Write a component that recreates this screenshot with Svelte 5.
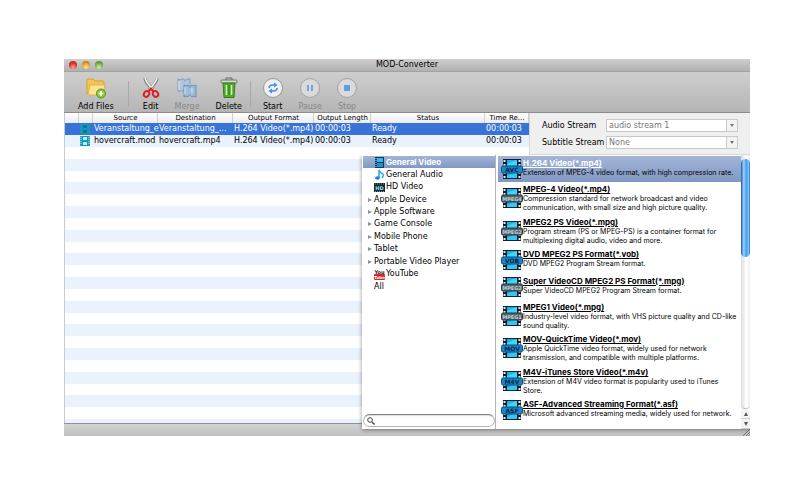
<script lang="ts">
    type Job = { source: string; dest: string; format: string };
    type Category = { name: string; icon?: string; group?: boolean };
    type Format = { name: string; tag: string; text: string; dark?: boolean };

    const jobs: Job[] = [
        {
            source: "Veranstaltung_e",
            dest: "Veranstaltung_...",
            format: "H.264 Video(*.mp4)",
        },
        {
            source: "hovercraft.mod",
            dest: "hovercraft.mp4",
            format: "H.264 Video(*.mp4)",
        },
    ];

    const categories: Category[] = [
        { name: "General Video", icon: "video" },
        { name: "General Audio", icon: "audio" },
        { name: "HD Video", icon: "hd" },
        { name: "Apple Device", group: true },
        { name: "Apple Software", group: true },
        { name: "Game Console", group: true },
        { name: "Mobile Phone", group: true },
        { name: "Tablet", group: true },
        { name: "Portable Video Player", group: true },
        { name: "YouTube", icon: "youtube" },
        { name: "All" },
    ];

    const formats: Format[] = [
        {
            name: "H.264 Video(*.mp4)",
            tag: "AVC",
            text: "Extension of MPEG-4 video format, with high compression rate.",
        },
        {
            name: "MPEG-4 Video(*.mp4)",
            tag: "MPEG4",
            dark: true,
            text: "Compression standard for network broadcast and video\ncommunication, with small size and high picture quality.",
        },
        {
            name: "MPEG2 PS Video(*.mpg)",
            tag: "MPEG2",
            dark: true,
            text: "Program stream (PS or MPEG-PS) is a container format for\nmultiplexing digital audio, video and more.",
        },
        {
            name: "DVD MPEG2 PS Format(*.vob)",
            tag: "VOB",
            text: "DVD MPEG2 Program Stream format.",
        },
        {
            name: "Super VideoCD MPEG2 PS Format(*.mpg)",
            tag: "MPEG2",
            dark: true,
            text: "Super VideoCD MPEG2 Program Stream format.",
        },
        {
            name: "MPEG1 Video(*.mpg)",
            tag: "MPEG1",
            dark: true,
            text: "Industry-level video format, with VHS picture quality and CD-like\nsound quality.",
        },
        {
            name: "MOV-QuickTime Video(*.mov)",
            tag: "MOV",
            text: "Apple QuickTime video format, widely used for network\ntransmission, and compatible with multiple platforms.",
        },
        {
            name: "M4V-iTunes Store Video(*.m4v)",
            tag: "M4V",
            text: "Extension of M4V video format is popularity used to iTunes\nStore.",
        },
        {
            name: "ASF-Advanced Streaming Format(*.asf)",
            tag: "ASF",
            text: "Microsoft advanced streaming media, widely used for network.",
        },
    ];

    let selectedJob = $state(0);
    let selectedCategory = $state("General Video");
    let selectedFormat = $state(0);
    let query = $state("");
</script>

{#snippet film()}
    <svg class="film" viewBox="0 0 10 10">
        <rect width="10" height="10" rx="1" fill="#1597b8" />
        <rect x="3" y="1" width="4" height="3" class="frame" />
        <rect x="3" y="6" width="4" height="3" class="frame" />
        <path d="M1 1v8M9 1v8" class="holes" stroke-dasharray="1 1" />
    </svg>
{/snippet}

<main class="window">
    <header class="titlebar">
        <div class="lights">
            <button class="red" aria-label="Close"></button>
            <button class="yellow" aria-label="Minimize"></button>
            <button class="green" aria-label="Zoom"></button>
        </div>
        <h1>MOD-Converter</h1>
    </header>

    <nav class="toolbar">
        <button class="tool">
            <svg viewBox="0 0 24 22">
                <path d="M3 17V3q0-1 1-1h5l2 2h8q1 0 1 1v12z" fill="#f0c651" stroke="#d3a133" />
                <path d="M4 18 6 8h15l-2 10z" fill="#fde394" stroke="#dfb44c" />
                <circle cx="17" cy="16.500" r="4.500" fill="#8cc63a" stroke="#5b9620" />
                <path d="M17 14v5M14.500 16.500h5" stroke="#fff" stroke-width="1.500" />
            </svg>
            <span>Add Files</span>
        </button>
        <i class="sep"></i>
        <button class="tool">
            <svg viewBox="0 0 24 22">
                <path d="M6 1q0 4 8 12M18 1q0 4-8 12" fill="none" stroke="#777" stroke-width="3" />
                <path d="M6 1q1 4 8 12M18 1q-1 4-8 12" fill="none" stroke="#f2f2f2" stroke-width="1.600" />
                <ellipse cx="7.500" cy="17" rx="2.500" ry="3" transform="rotate(35 7.500 17)" fill="none" stroke="#d92222" stroke-width="2" />
                <ellipse cx="16.500" cy="17" rx="2.500" ry="3" transform="rotate(-35 16.500 17)" fill="none" stroke="#d92222" stroke-width="2" />
                <path d="m9 15 3-3.500 3 3.500" fill="none" stroke="#d92222" stroke-width="2" />
            </svg>
            <span>Edit</span>
        </button>
        <button class="tool" disabled>
            <svg viewBox="0 0 24 22">
                <path d="M3 2q2 2 4 0h2q1 4 3 0h3v12H3z" fill="#b1c6dd" stroke="#7e9cbd" />
                <path d="M9 8q2 2 4 0 1 4 4 0 2 2 4 0v12q-2-2-4 0-3-4-4 0-2-2-4 0z" fill="#9dbbdc" stroke="#6b8fb9" />
                <path d="M4 4v9M10 10v7M17 11v5" stroke="#dce8f4" />
            </svg>
            <span>Merge</span>
        </button>
        <button class="tool">
            <svg viewBox="0 0 24 22">
                <path d="M9 3V1h6v2" fill="none" stroke="#666" />
                <rect x="4" y="3" width="16" height="3" rx="1" fill="#d9dfd5" stroke="#69756a" />
                <path d="m6 6 1 14.500h10L18 6z" fill="#50ad27" stroke="#39791f" />
                <path d="M9.500 8v10M14.500 8v10" stroke="#d2f3bc" stroke-width="1.500" />
                <path d="M12 8v10" stroke="#2f7d13" />
            </svg>
            <span>Delete</span>
        </button>
        <i class="sep near"></i>
        <button class="tool">
            <svg viewBox="0 0 24 22">
                <circle cx="12" cy="11" r="9.500" fill="#eee" stroke="#969696" />
                <path d="M8 11q0-3 4-3h1M16 11q0 3-4 3h-1" fill="none" stroke="#408fe8" stroke-width="1.600" />
                <path d="m13 5.500 3.500 2.500-3.500 2.500zM11 11.500 7.500 14l3.500 2.500z" fill="#408fe8" />
            </svg>
            <span>Start</span>
        </button>
        <button class="tool" disabled>
            <svg viewBox="0 0 24 22">
                <circle cx="12" cy="11" r="9.500" fill="#dadada" stroke="#a2a2a2" />
                <path d="M10 8v6M14 8v6" stroke="#6ea5ea" stroke-width="2" />
            </svg>
            <span>Pause</span>
        </button>
        <button class="tool" disabled>
            <svg viewBox="0 0 24 22">
                <circle cx="12" cy="11" r="9.500" fill="#dadada" stroke="#a2a2a2" />
                <rect x="9" y="8" width="6" height="6" fill="#5f9de9" />
            </svg>
            <span>Stop</span>
        </button>
    </nav>

    <div class="workspace">
        <section class="queue">
            <table>
                <colgroup>
                    <col class="c-check" />
                    <col class="c-icon" />
                    <col class="c-source" />
                    <col class="c-dest" />
                    <col class="c-format" />
                    <col class="c-length" />
                    <col />
                    <col class="c-time" />
                </colgroup>
                <thead>
                    <tr>
                        <th></th>
                        <th></th>
                        <th>Source</th>
                        <th>Destination</th>
                        <th>Output Format</th>
                        <th>Output Length</th>
                        <th>Status</th>
                        <th>Time Re...</th>
                    </tr>
                </thead>
                <tbody>
                    {#each jobs as job, i}
                        <tr
                            class:selected={selectedJob === i}
                            onclick={() => (selectedJob = i)}
                        >
                            <td></td>
                            <td>{@render film()}</td>
                            <td>{job.source}</td>
                            <td>{job.dest}</td>
                            <td>{job.format}</td>
                            <td>00:00:03</td>
                            <td>Ready</td>
                            <td>00:00:03</td>
                        </tr>
                    {/each}
                </tbody>
            </table>
            <div class="blank">
                {#each Array(24) as _}
                    <div></div>
                {/each}
            </div>
        </section>

        <section class="side">
            <form class="streams">
                <label for="audio">Audio Stream</label>
                <span class="pick">
                    <select id="audio" disabled><option>audio stream 1</option></select>
                </span>
                <label for="subtitle">Subtitle Stream</label>
                <span class="pick">
                    <select id="subtitle" disabled><option>None</option></select>
                </span>
            </form>
        </section>
    </div>

    <footer>
        <svg viewBox="0 0 7 7">
            <path d="M0 7l7-7M3 7l4-4M5.500 7 7 5.500" stroke="#777" />
        </svg>
    </footer>

    <div class="popup">
        <div class="left">
            <ul class="tree">
                {#each categories as cat}
                    <li class:selected={selectedCategory === cat.name}>
                        <button onclick={() => (selectedCategory = cat.name)}>
                            <span class="arrow" class:shown={cat.group}></span>
                            {#if cat.icon}
                                <svg viewBox="0 0 11 11">
                                    {#if cat.icon === "video"}
                                        <rect x="1" width="9" height="11" fill="#123a52" />
                                        <rect x="3" y="1" width="6" height="4" fill="#35b6ef" />
                                        <rect x="3" y="6" width="6" height="4" fill="#1d8fd6" />
                                        <path d="M2 1v9" stroke="#8ed8f5" stroke-dasharray="1 1" />
                                    {:else if cat.icon === "audio"}
                                        <path d="M5 9V1q1 3 4 4 1 2-1 4" fill="none" stroke="#2ba4ea" stroke-width="1.500" />
                                        <ellipse cx="3.500" cy="9" rx="2.500" ry="1.800" fill="#1688dc" />
                                    {:else if cat.icon === "hd"}
                                        <rect y="1" width="11" height="9" fill="#17262e" />
                                        <path d="M1 2h9M1 9.500h9" stroke="#3fa6c9" stroke-dasharray="1 1" />
                                        <text x="5.500" y="8" text-anchor="middle" font-size="5" font-weight="bold" fill="#9fe0f2">HD</text>
                                    {:else}
                                        <rect y="5" width="11" height="6" rx="1" fill="#d92727" />
                                        <text x="5.500" y="4.500" text-anchor="middle" font-size="5" font-weight="bold" fill="#222">You</text>
                                        <text x="5.500" y="9.500" text-anchor="middle" font-size="4" font-weight="bold" fill="#fff">Tube</text>
                                    {/if}
                                </svg>
                            {/if}
                            {cat.name}
                        </button>
                    </li>
                {/each}
            </ul>
            <label class="search">
                <svg viewBox="0 0 8 8">
                    <circle cx="3" cy="3" r="2.300" fill="none" stroke="#444" />
                    <path d="m5 5 2.500 2.500" stroke="#444" stroke-width="1.400" />
                </svg>
                <input type="text" aria-label="Search formats" bind:value={query} />
            </label>
        </div>

        <ul class="formats">
            {#each formats as format, i}
                <li class:selected={selectedFormat === i}>
                    <button onclick={() => (selectedFormat = i)}>
                        <svg viewBox="0 0 22 20">
                            <rect x="2" width="18" height="20" fill="#10202a" />
                            <path d="M3.500 1v18M18.500 1v18" stroke="#dfeff5" stroke-width="2" stroke-dasharray="2 2" />
                            <rect x="6" y="1" width="10" height="8" fill="#19b4ea" />
                            <path d="M6 9V5l10-4v8z" fill="#43d4f8" />
                            <rect x="6" y="11" width="10" height="8" fill="#18a5e4" />
                            <path d="M6 19v-2l10-5v7z" fill="#36c6f3" />
                            <rect
                                x="0.500"
                                y="7"
                                width="21"
                                height="7"
                                rx="1.500"
                                fill={format.dark ? "#53646f" : "#1787d0"}
                                stroke={format.dark ? "#27363f" : "#0d4e80"}
                            />
                            <text
                                x="11"
                                y="12.500"
                                text-anchor="middle"
                                font-size={format.dark ? 5 : 6}
                                font-weight="bold"
                                fill={format.dark ? "#c3ccd2" : "#0b2438"}>{format.tag}</text
                            >
                        </svg>
                        <span class="info">
                            <b>{format.name}</b>
                            <span>{format.text}</span>
                        </span>
                    </button>
                </li>
            {/each}
        </ul>

        <div class="scroll">
            <div class="track"><div class="thumb"></div></div>
            <button aria-label="Scroll up"><i class="up"></i></button>
            <button aria-label="Scroll down"><i class="down"></i></button>
        </div>
    </div>
</main>

<style>
    :global(body) {
        background: #fff;
    }

    .window {
        position: relative;
        margin: 59px 50px 0 64px;
        font-family: "Lucida Grande", "DejaVu Sans", sans-serif;
        font-size: 8px;
        line-height: 10px;
        color: #000;
    }

    button {
        padding: 0;
        border: 0;
        background: none;
        font: inherit;
        color: inherit;
    }

    ul {
        margin: 0;
        padding: 0;
        list-style: none;
    }

    .titlebar {
        display: grid;
        grid-template-columns: 1fr auto 1fr;
        align-items: center;
        height: 13px;
        box-sizing: border-box;
        background: linear-gradient(#cfcfcf, #b0b0b0);
        border-bottom: 1px solid #a2a2a2;
    }

    h1 {
        margin: 0;
        font-size: 8px;
        font-weight: 400;
        line-height: 12px;
    }

    .lights {
        display: flex;
        gap: 5px;
        padding-left: 5px;
    }

    .lights button {
        width: 8px;
        height: 8px;
        border-radius: 50%;
    }

    .lights .red {
        background: radial-gradient(circle at 50% 80%, #ffa69a, #e0382e 50%, #96231d);
    }

    .lights .yellow {
        background: radial-gradient(circle at 50% 80%, #ffe9a0, #e8a530 50%, #9a6416);
    }

    .lights .green {
        background: radial-gradient(circle at 50% 80%, #d5f5ae, #72b944 50%, #40761f);
    }

    .toolbar {
        display: flex;
        gap: 16px;
        height: 41px;
        box-sizing: border-box;
        padding: 5px 14px 0;
        background: linear-gradient(#cecece, #b5b5b5);
        border-bottom: 1px solid #8c8c8c;
    }

    .tool {
        display: flex;
        flex-direction: column;
        align-items: center;
        gap: 3px;
    }

    .tool svg {
        width: 24px;
        height: 22px;
        margin: 0 -4px;
    }

    .tool:disabled {
        color: #888;
    }

    .sep {
        width: 1px;
        height: 26px;
        margin: 4px -2px 0;
        background: #a9a9a9;
    }

    .sep.near {
        margin: 4px -4px 0 -8px;
    }

    .workspace {
        display: grid;
        grid-template-columns: 1fr 221px;
        min-height: 310px;
    }

    .queue {
        display: flex;
        flex-direction: column;
        min-width: 0;
        border-left: 1px solid #c4cbd6;
        box-sizing: border-box;
    }

    table {
        width: 100%;
        table-layout: fixed;
        border-collapse: collapse;
    }

    .c-check,
    .c-icon {
        width: 14px;
    }

    .c-source {
        width: 65px;
    }

    .c-dest {
        width: 75px;
    }

    .c-format {
        width: 81px;
    }

    .c-length {
        width: 57px;
    }

    .c-time {
        width: 44px;
    }

    th {
        height: 10px;
        padding: 0;
        font-size: 7px;
        font-weight: 400;
        line-height: 10px;
        white-space: nowrap;
        background: linear-gradient(#fff, #ececec);
        box-shadow: inset -1px 0 #cfcfcf;
    }

    td {
        height: 12px;
        padding: 0 0 0 1px;
        line-height: 12px;
        white-space: nowrap;
    }

    tbody tr:nth-child(even) {
        background: #eaf2fe;
    }

    tbody tr.selected {
        background: #3874d8;
        color: #fff;
    }

    .film {
        display: block;
        width: 10px;
        height: 10px;
    }

    .frame {
        fill: #b9eefa;
    }

    .holes {
        stroke: #d8f6fc;
    }

    .selected .frame,
    .selected .holes {
        fill: #1b6f9c;
        stroke: none;
    }

    .blank {
        display: flex;
        flex: 1;
        flex-direction: column;
    }

    .blank div {
        flex: 3;
    }

    .blank div:nth-child(even) {
        background: #eaf2fe;
    }

    .blank div:last-child {
        flex: 1;
    }

    .side {
        background: #fff;
    }

    .streams {
        display: grid;
        grid-template-columns: 64px 1fr;
        align-items: center;
        row-gap: 4px;
        height: 42px;
        box-sizing: border-box;
        padding: 6px 12px 5px;
        background: #efefef;
        border-bottom: 1px solid #d6d6d6;
        border-left: 1px solid #d6d6d6;
        white-space: nowrap;
    }

    .pick {
        position: relative;
        display: block;
        height: 13px;
    }

    .pick::before {
        content: "";
        position: absolute;
        top: 1px;
        right: 1px;
        bottom: 1px;
        width: 10px;
        background: #f3f3f3;
        border-left: 1px solid #c8c8c8;
    }

    .pick::after {
        content: "";
        position: absolute;
        top: 5px;
        right: 4px;
        border: 2px solid transparent;
        border-top: 3px solid #777;
        border-bottom: 0;
    }

    select {
        display: block;
        width: 100%;
        height: 13px;
        padding: 0 2px;
        appearance: none;
        background: #fff;
        border: 1px solid #c8c8c8;
        border-radius: 0;
        font: inherit;
        color: #777;
        opacity: 1;
    }

    footer {
        display: flex;
        align-items: flex-end;
        justify-content: flex-end;
        height: 13px;
        box-sizing: border-box;
        background: linear-gradient(#d2d2d2, #c0c0c0);
        border-top: 1px solid #909090;
    }

    footer svg {
        width: 7px;
        height: 7px;
    }

    .popup {
        position: absolute;
        top: 96px;
        right: 0;
        bottom: 7px;
        display: grid;
        grid-template-rows: 100%;
        grid-template-columns: 134px 1fr 9px;
        width: 388px;
        background: #fff;
        box-shadow: 0 1px 4px rgba(0, 0, 0, 0.45);
        clip-path: inset(0 0 -6px -6px);
    }

    .left {
        display: flex;
        flex-direction: column;
        justify-content: space-between;
        padding: 1px 0 2px 1px;
        border-right: 1px solid #b5b5b5;
    }

    .tree {
        display: flex;
        flex-direction: column;
        height: 137px;
    }

    .tree li {
        display: flex;
        flex: 1;
    }

    .tree button {
        display: flex;
        flex: 1;
        align-items: center;
        gap: 1px;
        padding-left: 3px;
    }

    .tree svg {
        width: 11px;
        height: 11px;
        overflow: visible;
    }

    .arrow {
        width: 7px;
    }

    .arrow.shown::before {
        content: "";
        display: block;
        width: 0;
        margin-left: 2px;
        border: 2px solid transparent;
        border-right: 0;
        border-left: 4px solid #8a939c;
    }

    .tree .selected,
    .formats .selected {
        background: linear-gradient(#a3b4d6, #8197c3);
    }

    .tree .selected {
        color: #fff;
        font-family: Inter, sans-serif;
        font-weight: 700;
    }

    .search {
        display: flex;
        align-items: center;
        gap: 2px;
        height: 13px;
        box-sizing: border-box;
        padding: 0 3px;
        border: 1px solid #b4b4b4;
        border-top-color: #808080;
        border-radius: 7px;
        box-shadow: inset 0 1px 1px #ddd;
    }

    .search svg {
        width: 8px;
        height: 8px;
    }

    .search input {
        flex: 1;
        min-width: 0;
        height: 10px;
        padding: 0;
        border: 0;
        outline: 0;
        background: none;
        font: inherit;
    }

    .formats {
        display: flex;
        flex-direction: column;
        justify-content: space-between;
        min-width: 0;
        padding: 1px 0 6px 2px;
    }

    .formats button {
        display: flex;
        align-items: center;
        width: 100%;
        min-height: 26px;
        padding-left: 3px;
        text-align: left;
    }

    .formats svg {
        flex: none;
        width: 22px;
        height: 20px;
    }

    .info {
        flex: 1;
        align-self: flex-start;
        padding: 2px 0;
        font-family: Inter, sans-serif;
        font-size: 7px;
        line-height: 9px;
    }

    .info b,
    .info span {
        display: block;
        white-space: pre;
    }

    .info b {
        font-size: 8px;
        line-height: 10px;
        text-decoration: underline;
    }

    .selected b {
        color: #fff;
    }

    .scroll {
        display: flex;
        flex-direction: column;
        background: #f4f4f4;
    }

    .track {
        flex: 1;
        padding-top: 4px;
        background: linear-gradient(90deg, #ddd, #fff 60%, #eee);
        border-bottom: 1px solid #bbb;
        border-radius: 0 0 5px 5px;
    }

    .thumb {
        height: 98px;
        border-radius: 5px;
        background: linear-gradient(90deg, #1b59b8, #9ad2fb 30%, #4a9df0 60%, #7cc7fb 85%, #2a66b8);
    }

    .scroll button {
        display: grid;
        place-items: center;
        height: 10px;
        border-bottom: 1px solid #ccc;
    }

    .up,
    .down {
        border: 2px solid transparent;
    }

    .up {
        border-top: 0;
        border-bottom: 4px solid #555;
    }

    .down {
        border-top: 4px solid #555;
        border-bottom: 0;
    }
</style>
